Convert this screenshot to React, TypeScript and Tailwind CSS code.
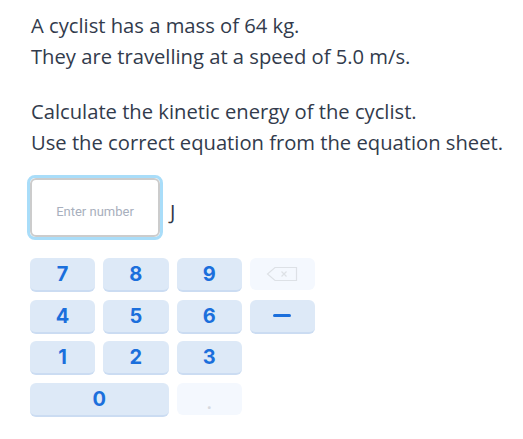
const keys = ["7", "8", "9", "bksp", "4", "5", "6", "-", "1", "2", "3", "", "0", "."];

function Key({ k }: { k: string }) {
  if (k === "") return <div />;
  if (k === "bksp") {
    return (
      <div className="h-[32px] rounded-[6px] bg-[#f4f8fe] flex items-center justify-center">
        <svg width="32" height="16" viewBox="0 0 32 16" fill="none" stroke="#dde1e6" strokeWidth="1.2">
          <path d="M9 1.5H30.5V14.5H9L1.5 8Z" />
          <path d="M15.5 5.5L20.5 10.5M20.5 5.5L15.5 10.5" />
        </svg>
      </div>
    );
  }
  if (k === ".") {
    return (
      <div className="h-[32px] rounded-[6px] bg-[#f4f8fe] flex items-center justify-center text-[#d6d9de] text-[16px] font-bold pt-2">
        .
      </div>
    );
  }
  return (
    <button
      className={`h-[34px] rounded-[6px] bg-[#dde9f7] border-b-2 border-[#cbdcf2] flex items-center justify-center text-[#1b6fdc] text-[20px] font-bold ${
        k === "0" ? "col-span-2" : ""
      }`}
      style={{ fontFamily: "Inter, 'Noto Sans', sans-serif" }}
    >
      {k === "-" ? <span className="block w-[18px] h-[3px] bg-[#1b6fdc] rounded-sm" /> : k}
    </button>
  );
}

export default function App() {
  return (
    <div className="w-[523px] h-[439px] bg-white pt-[10px]">
      <div
        className="pl-[31px] text-[20.2px] leading-[31px] text-[#323b4c]"
        style={{ fontFamily: "'Open Sans', sans-serif" }}
      >
        <p>A cyclist has a mass of 64 kg.</p>
        <p>They are travelling at a speed of 5.0 m/s.</p>
        <p className="mt-[24px]">Calculate the kinetic energy of the cyclist.</p>
        <p>Use the correct equation from the equation sheet.</p>
      </div>

      <div className="flex items-center mt-[17px] pl-[27px]">
        <div className="w-[136px] h-[65px] rounded-[8px] border-[3px] border-[#a9ddf9]">
          <div className="w-full h-full rounded-[6px] border-2 border-[#cccccc] flex items-center justify-center pt-[9px]">
            <span
              className="text-[13px] text-[#a8afbd]"
              style={{ fontFamily: "Roboto, 'Noto Sans', sans-serif" }}
            >
              Enter number
            </span>
          </div>
        </div>
        <span
          className="ml-[7px] mt-[8px] text-[20px] text-[#2f3848]"
          style={{ fontFamily: "'Open Sans', sans-serif" }}
        >
          J
        </span>
      </div>

      <div className="ml-[30px] mt-[18px] w-[285px] grid grid-cols-4 gap-x-[8px] gap-y-[7.5px]">
        {keys.map((k, i) => (
          <Key key={i} k={k} />
        ))}
      </div>
    </div>
  );
}
